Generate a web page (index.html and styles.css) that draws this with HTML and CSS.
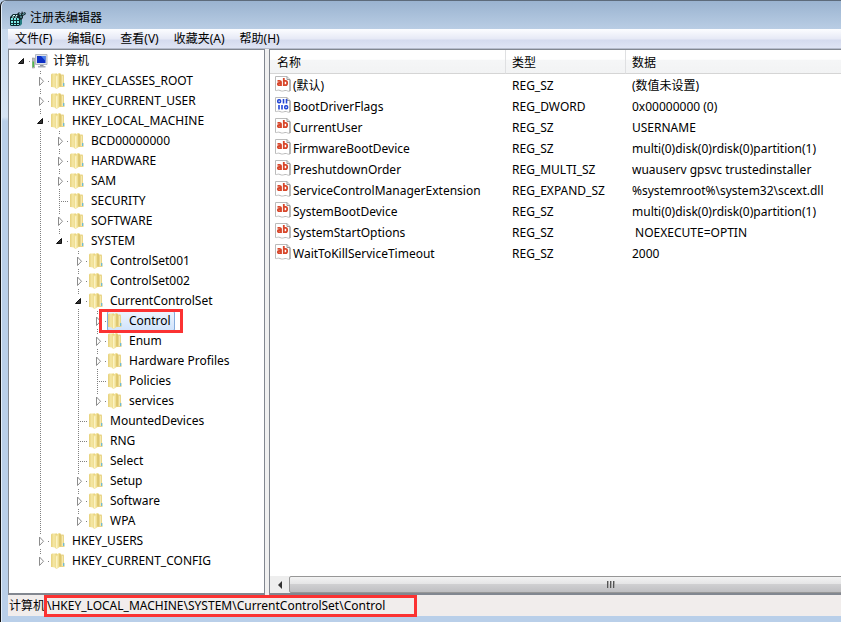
FILE: index.html
```html
<!DOCTYPE html>
<html lang="zh-CN">
<head>
  <meta charset="UTF-8" />
  <meta name="viewport" content="width=device-width, initial-scale=1.0" />
  <title>注册表编辑器</title>
  <link rel="stylesheet" href="styles.css">
</head>
<body>
  <svg class="defs" width="0" height="0">
    <linearGradient id="gold" x1="0" y1="0" x2="1" y2="0">
      <stop offset="0" stop-color="#e6d07a" />
      <stop offset=".5" stop-color="#f6e9a8" />
      <stop offset="1" stop-color="#e2c967" />
    </linearGradient>
    <symbol id="folder" viewBox="0 0 16 16">
      <path d="M6 1.500h6.500l.5 1v7l.5 1V14H7z" fill="#ead68a" />
      <path d="M0 1.500L1 .5h5V15L1 14H0z" fill="url(#gold)" />
      <path d="M4 2.500L8 0h1.500v13.500L5.500 16 4 15z" fill="#f0df94" />
      <path d="M5 3.500l1.500-1V15L5 15.500z" fill="#fbf3c4" />
      <path d="M9 1v12.500" stroke="#d0b452" />
      <path d="M11.500 3v10" stroke="#f5e9b0" />
      <path d="M12.700 10v3" stroke="#52b5e8" />
    </symbol>
    <symbol id="computer" viewBox="0 0 16 16">
      <path d="M0 5h2.500v10H0z" fill="#b4bab8" stroke="#888" stroke-width=".5" />
      <path d="M.5 8.500h1.500V14H.5z" fill="#51bd48" />
      <path d="M3.500 1.500h11.500v10H3.500z" fill="#dde1e8" stroke="#b3b8c2" />
      <path d="M5 3h8.500v7H5z" fill="#0d2fc5" />
      <path d="M9 3h4.500v5z" fill="#4b80ea" />
      <path d="M8 12h3.500v1.500H8z" fill="#8c929c" />
      <path d="M6 13h7.500v1.500H6z" fill="#a8adb6" />
    </symbol>
    <symbol id="sheet" viewBox="0 0 16 16">
      <path d="M.5.5h11.500l3 3V15c-2 1-3-1-5-.500s-3 1-5 0-3 .5-4.500 0z" fill="#fff" stroke="#bbb" />
      <path d="M12 .5v3h3" fill="none" stroke="#999" />
      <path d="M15 4v11" stroke="#929292" />
    </symbol>
    <symbol id="string" viewBox="0 0 16 16">
      <use href="#sheet" />
      <g fill="none" stroke="#d8472b" stroke-width="1.800">
        <path d="M2.500 4.800h2q1.500 0 1.500 1.200v4M6 7H4q-1.200 0-1.200 1.100T4 9.200h2" />
        <path d="M8.800 2v8M8.800 4.800h1.700q1.700 0 1.700 2.200t-1.700 2.200H8.800" />
      </g>
    </symbol>
    <symbol id="binary" viewBox="0 0 16 16">
      <use href="#sheet" />
      <g fill="none" stroke="#2447d6" stroke-width="1.600">
        <rect x="2.800" y="2.800" width="2.700" height="3" rx="1" />
        <path d="M8.500 2v4.600M11.500 2v4.600" />
        <path d="M4 8v4.600M7 8v4.600" />
        <rect x="9.800" y="8.800" width="2.700" height="3" rx="1" />
      </g>
    </symbol>
  </svg>

  <div class="window">
    <header class="titlebar">
      <svg class="app-icon" viewBox="0 0 17 17">
        <path d="M1 7l3-3h5l3 3v7l-2 2H2l-1-1z" fill="#0d2c30" />
        <path d="M2 8h2v2H2zM5 8h2v2H5zM8 8h2v2H8zM2 11h2v2H2zM5 11h2v2H5zM8 11h2v2H8zM2 14h2v1H2zM5 14h2v1H5zM8 14h2v1H8z" fill="#7be9e6" />
        <path d="M4 5.500h2M7 5.500h2M3 7h2M6 7h2" stroke="#d8ffff" />
        <path d="M11 8l2 1v5l-2 2z" fill="#247c80" />
        <path d="M8 4l2-2 2 2 1-3 1 2 2-1 1 2-3 2v2l-2 2-3-2z" fill="#15262c" />
        <path d="M10 3.500l2 1.500M13.500 5l2-2M11 7h2" stroke="#79c9cf" />
      </svg>
      <h1>注册表编辑器</h1>
    </header>

    <nav class="menubar">
      <button>文件(F)</button>
      <button>编辑(E)</button>
      <button>查看(V)</button>
      <button>收藏夹(A)</button>
      <button>帮助(H)</button>
    </nav>

    <main class="panes">
      <section class="tree-pane">
        <ul class="tree" id="tree"></ul>
      </section>

      <section class="list-pane">
        <table>
          <colgroup>
            <col class="col-name">
            <col class="col-type">
            <col>
          </colgroup>
          <thead>
            <tr><th>名称</th><th>类型</th><th>数据</th></tr>
          </thead>
          <tbody id="values"></tbody>
        </table>
        <div class="scrollbar">
          <button class="scroll-left" aria-label="向左滚动"></button>
          <div class="thumb"><i></i><i></i><i></i></div>
        </div>
      </section>
    </main>

    <footer class="statusbar">
      <span>计算机</span><span class="path">\HKEY_LOCAL_MACHINE\SYSTEM\CurrentControlSet\Control</span>
    </footer>
  </div>

  <script src="script.js"></script>
</body>
</html>
```
FILE: styles.css
```css
* {
  box-sizing: border-box;
  margin: 0;
  padding: 0;
}

body {
  min-height: 100vh;
  overflow-x: hidden;
  background: #b9cfe9;
  font: 12px/20px "Noto Sans", "Noto Sans CJK SC", sans-serif;
  color: #000;
}

button {
  border: 0;
  background: none;
  font: inherit;
  color: inherit;
}

.defs {
  position: absolute;
}

.window {
  display: flex;
  flex-direction: column;
  min-height: 100vh;
  padding: 0 0 6px 7px;
  border-left: 1px solid #111;
  border-top: 1px solid #5d6b7b;
  border-top-left-radius: 6px;
  background: linear-gradient(#c3d5ea, #d6e4f4 116px, #b9cfe9 120px);
  box-shadow: inset 1px 1px #e3eefa;
}

.titlebar {
  display: flex;
  align-items: center;
  gap: 4px;
  height: 28px;
  margin-left: -6px;
  padding: 6px 0 0 7px;
  border-top-left-radius: 5px;
  background: linear-gradient(#9ab3d0, #b9cde4);
}

.titlebar h1 {
  font-size: 12px;
  font-weight: normal;
}

.app-icon {
  width: 17px;
  height: 17px;
}

.menubar {
  display: flex;
  gap: 1px;
  height: 20px;
  border-bottom: 1px solid #b6bccc;
  background: linear-gradient(#fcfdff, #e7eaf6 50%, #d5dbee 60%, #dfe4f4);
}

.menubar button {
  padding: 0 7px;
}

.panes {
  display: flex;
  flex: 1;
  gap: 4px;
  background: #f0f0f0;
}

.tree-pane,
.list-pane {
  border: 1px solid #828790;
  border-bottom-width: 2px;
  background: #fff;
}

.tree-pane {
  flex: none;
  width: 257px;
  padding: 1px 0 0 5px;
}

.tree,
.tree ul {
  list-style: none;
}

.tree ul {
  padding-left: 19px;
}

.tree li {
  position: relative;
}

/* dotted guide between siblings */
.tree ul > li::before {
  content: "";
  position: absolute;
  left: 7px;
  top: 0;
  bottom: 0;
  width: 1px;
  background: repeating-linear-gradient(#808080 0 1px, transparent 1px 2px);
}

.tree ul > li:last-child::before {
  bottom: auto;
  height: 10px;
}

.row {
  position: relative;
  display: flex;
  align-items: center;
  height: 20px;
}

.row::before {
  content: "";
  width: 10px;
  height: 1px;
  margin: 0 0 0 7px;
  background: repeating-linear-gradient(90deg, #808080 0 1px, transparent 1px 2px);
}

.toggle {
  position: absolute;
  left: 2px;
  width: 12px;
  height: 14px;
  background: #fff;
}

.toggle svg {
  display: block;
  width: 12px;
  height: 14px;
}

.item {
  position: relative;
  display: flex;
  align-items: center;
  gap: 5px;
  height: 20px;
  padding: 0 4px 0 1px;
  color: #000;
  text-decoration: none;
  white-space: nowrap;
}

.item svg,
td svg {
  flex: none;
  width: 16px;
  height: 16px;
}

.item.selected {
  border-radius: 2px;
  background: linear-gradient(#eef5fe, #cfe2fb);
  box-shadow: inset 0 0 0 1px #84acdd;
}

/* red callout frames */
.item.selected::after,
.path::after {
  content: "";
  position: absolute;
  border: 3px solid #fb3232;
}

.item.selected::after {
  inset: -2px -8px;
}

.list-pane {
  display: flex;
  flex: 1;
  flex-direction: column;
  justify-content: space-between;
  min-width: 0;
  overflow: hidden;
  border-right: 0;
}

table {
  width: 100%;
  table-layout: fixed;
  border-collapse: separate;
  border-spacing: 0;
}

.col-name {
  width: 236px;
}

.col-type {
  width: 120px;
}

th {
  height: 24px;
  padding: 2px 6px 0;
  border-right: 1px solid #dfe0e2;
  border-bottom: 1px solid #d5d5d5;
  background: linear-gradient(#fff 40%, #f5f6f7 45%, #f2f3f4);
  font-weight: normal;
  text-align: left;
}

th:first-child {
  padding-left: 7px;
}

th:last-child {
  border-right: 0;
}

td {
  height: 21px;
  padding: 0 6px;
  white-space: pre;
}

td:first-child {
  padding-left: 5px;
}

tbody tr:first-child td {
  height: 22px;
  padding-top: 1px;
}

.value-name {
  display: flex;
  gap: 2px;
}

.scrollbar {
  display: flex;
  height: 17px;
  background: #eee;
}

.scroll-left {
  flex: none;
  width: 19px;
}

.scroll-left::before {
  content: "";
  display: block;
  width: 0;
  margin: 0 auto;
  border: 4px solid transparent;
  border-left-width: 0;
  border-right-color: #333;
}

.thumb {
  display: flex;
  flex: 1;
  align-items: center;
  justify-content: center;
  gap: 1px;
  margin-right: -92px;
  border: 1px solid #979797;
  border-radius: 2px;
  background: linear-gradient(#f3f3f3, #e5e5e6 45%, #cfcfd1 50%, #bfbfc2);
}

.thumb i {
  width: 2px;
  height: 7px;
  border-left: 1px solid #555;
  border-right: 1px solid #aaa;
}

.statusbar {
  display: flex;
  height: 21px;
  padding-left: 1px;
  background: #f1edec;
  line-height: 22px;
  white-space: nowrap;
}

.path {
  position: relative;
  padding: 0 32px 0 2px;
}

.path::after {
  inset: 0 0 -1px -1px;
}
```
FILE: script.js
```js
const leaf = (name) => ({ name, leaf: true });
const closed = (name) => ({ name });
const open = (name, children) => ({ name, children });

const root = open('计算机', [
  closed('HKEY_CLASSES_ROOT'),
  closed('HKEY_CURRENT_USER'),
  open('HKEY_LOCAL_MACHINE', [
    closed('BCD00000000'),
    closed('HARDWARE'),
    closed('SAM'),
    leaf('SECURITY'),
    closed('SOFTWARE'),
    open('SYSTEM', [
      closed('ControlSet001'),
      closed('ControlSet002'),
      open('CurrentControlSet', [
        closed('Control'),
        closed('Enum'),
        closed('Hardware Profiles'),
        leaf('Policies'),
        closed('services'),
      ]),
      leaf('MountedDevices'),
      leaf('RNG'),
      leaf('Select'),
      closed('Setup'),
      closed('Software'),
      closed('WPA'),
    ]),
  ]),
  closed('HKEY_USERS'),
  closed('HKEY_CURRENT_CONFIG'),
]);

const values = [
  ['string', '(默认)', 'REG_SZ', '(数值未设置)'],
  ['binary', 'BootDriverFlags', 'REG_DWORD', '0x00000000 (0)'],
  ['string', 'CurrentUser', 'REG_SZ', 'USERNAME'],
  ['string', 'FirmwareBootDevice', 'REG_SZ', 'multi(0)disk(0)rdisk(0)partition(1)'],
  ['string', 'PreshutdownOrder', 'REG_MULTI_SZ', 'wuauserv gpsvc trustedinstaller'],
  ['string', 'ServiceControlManagerExtension', 'REG_EXPAND_SZ', '%systemroot%\\system32\\scext.dll'],
  ['string', 'SystemBootDevice', 'REG_SZ', 'multi(0)disk(0)rdisk(0)partition(1)'],
  ['string', 'SystemStartOptions', 'REG_SZ', ' NOEXECUTE=OPTIN'],
  ['string', 'WaitToKillServiceTimeout', 'REG_SZ', '2000'],
];

const icon = (id) => `<svg><use href="#${id}" /></svg>`;

const arrow = (isOpen) => isOpen
  ? '<path d="M7.500 4.500v5h-5z" fill="#333" stroke="#111" />'
  : '<path d="M4.500 3v8.500l4-4.250z" fill="#fff" stroke="#8c8c8c" />';

const renderNode = (node, isRoot) => {
  const toggle = node.leaf ? '' : `
    <button class="toggle" aria-label="${node.name}">
      <svg viewBox="0 0 12 14">${arrow(node.children)}</svg>
    </button>`;
  const selected = node.name === 'Control' ? ' selected' : '';
  const children = node.children
    ? `<ul>${node.children.map((child) => renderNode(child)).join('')}</ul>`
    : '';
  return `<li>
    <div class="row">${toggle}<a class="item${selected}" href="#">${icon(isRoot ? 'computer' : 'folder')}${node.name}</a></div>
    ${children}
  </li>`;
};

document.getElementById('tree').innerHTML = renderNode(root, true);

document.getElementById('values').innerHTML = values.map(([type, name, kind, data]) => `
  <tr>
    <td><div class="value-name">${icon(type)}${name}</div></td>
    <td>${kind}</td>
    <td>${data}</td>
  </tr>`).join('');
```
